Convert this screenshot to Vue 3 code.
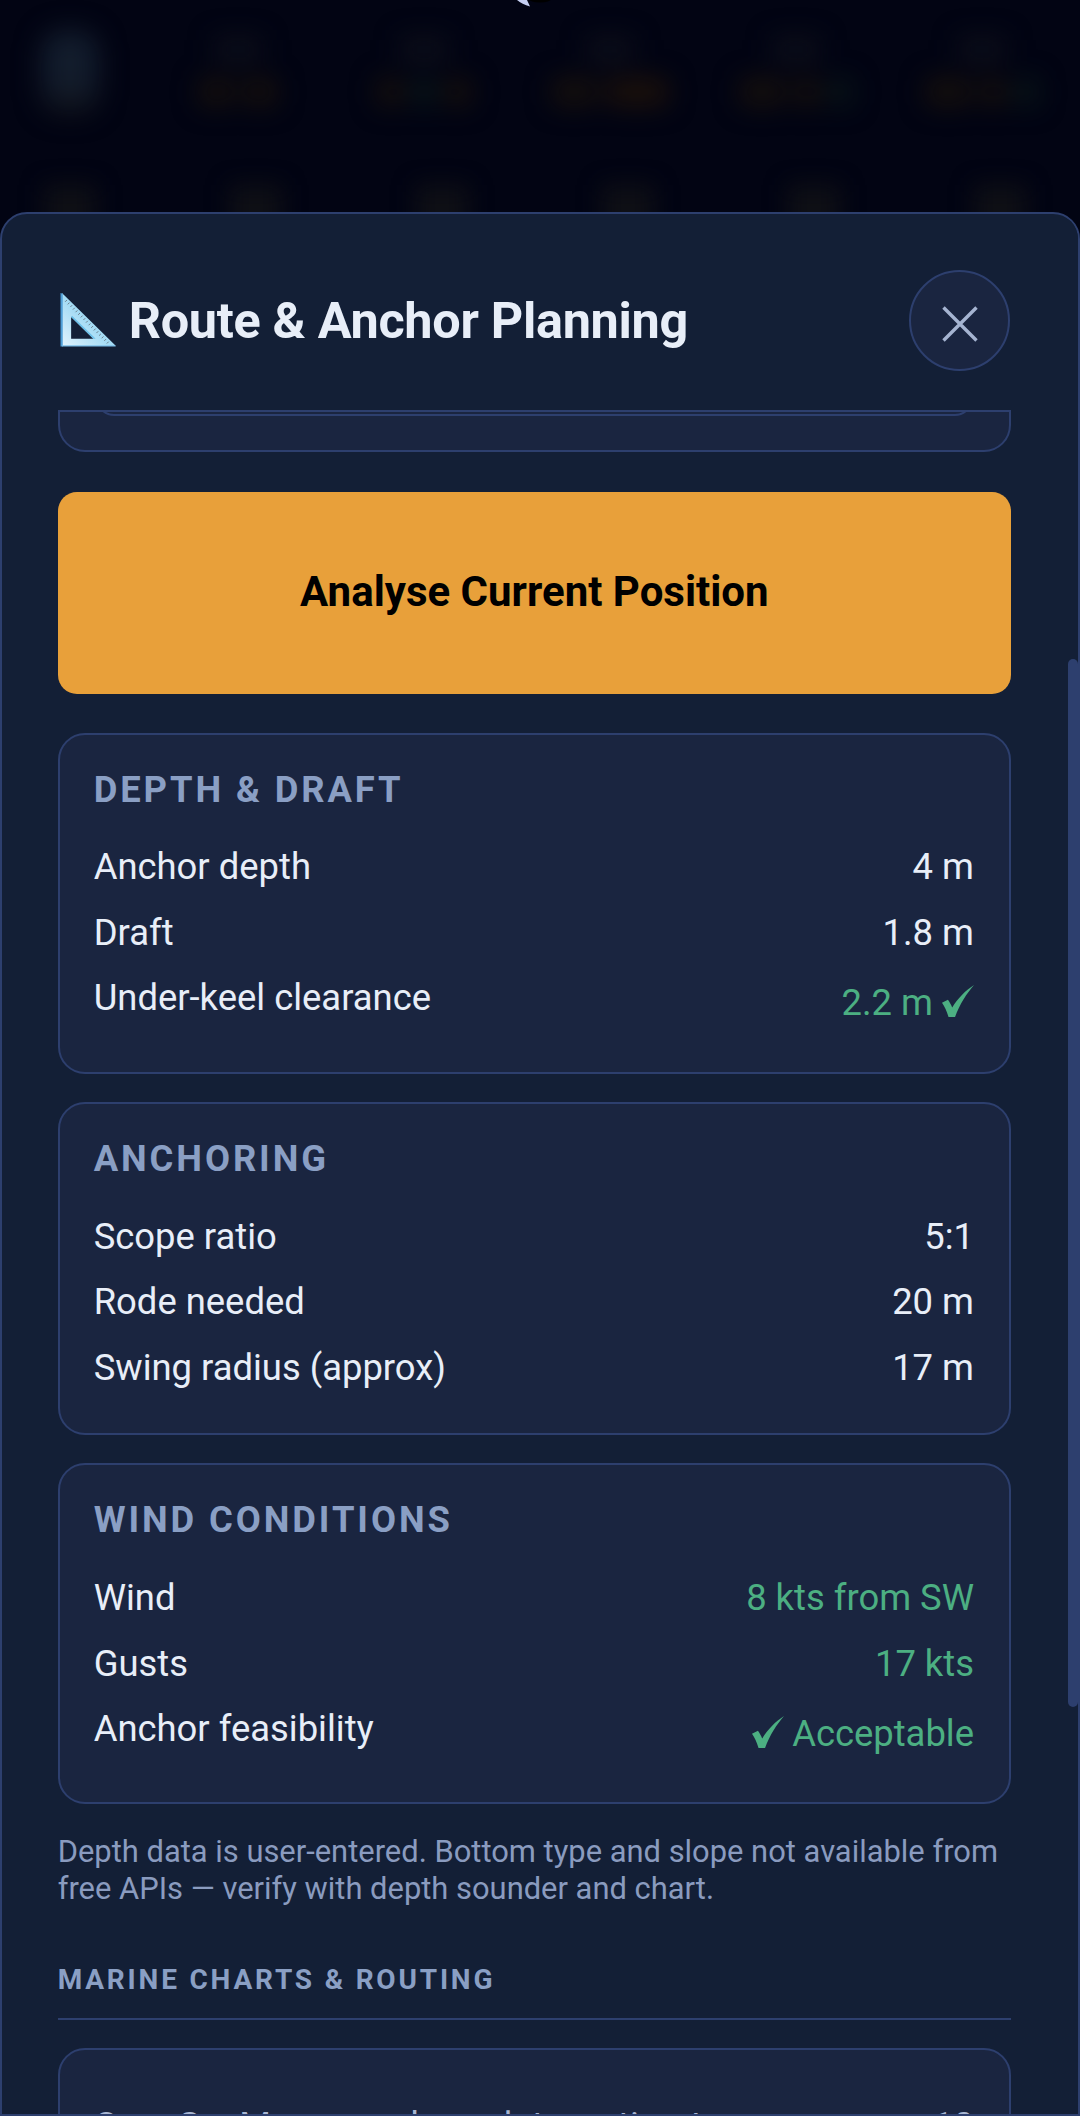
<script setup>
const cols = [
  { pills: ['o w', 'o w'] },
  { pills: ['o s', 'g s', 'o s'] },
  { pills: ['o m', 'o xl'] },
  { pills: ['o m', 'o s', 'g s'] },
  { pills: ['o m', 'o s', 'g s'] },
]

const cards = [
  {
    title: 'Depth & Draft',
    rows: [
      { label: 'Anchor depth', value: '4 m' },
      { label: 'Draft', value: '1.8 m' },
      { label: 'Under-keel clearance', value: '2.2 m', after: true, good: true },
    ],
  },
  {
    title: 'Anchoring',
    rows: [
      { label: 'Scope ratio', value: '5:1' },
      { label: 'Rode needed', value: '20 m' },
      { label: 'Swing radius (approx)', value: '17 m' },
    ],
  },
  {
    title: 'Wind conditions',
    rows: [
      { label: 'Wind', value: '8 kts from SW', good: true },
      { label: 'Gusts', value: '17 kts', good: true },
      { label: 'Anchor feasibility', before: true, value: 'Acceptable', good: true },
    ],
  },
]

const ticks = Array.from({ length: 17 }, (_, i) => {
  const t = 0.1 + i * 0.052
  const x = 2 + 52 * t
  const y = 2 + 52 * t
  return { x1: x, y1: y, x2: x - 1.9, y2: y + 1.9 }
})
</script>

<template>
  <div class="page">
    <div class="backdrop">
      <div class="blur-layer">
        <div class="first-col"></div>
        <div v-for="(c, i) in cols" :key="i" class="col">
          <span class="label-blob"></span>
          <div class="pills">
            <span v-for="(p, j) in c.pills" :key="j" class="pill" :class="p"></span>
          </div>
        </div>
      </div>
      <div class="blur-layer row-two">
        <span v-for="n in 6" :key="n" class="lower-blob"></span>
      </div>
    </div>

    <svg class="fragment" width="80" height="8" viewBox="0 0 80 8" aria-hidden="true">
      <path d="M27 0 L37 0 L40 6.5 Q32 4 27 0 Z" fill="#c6cff2" />
      <ellipse cx="50" cy="-1" rx="11" ry="3.4" fill="#000" />
    </svg>

    <section class="sheet">
      <header class="sheet-head">
        <h1 class="title">
          <svg class="set-square" viewBox="0 0 58 56" aria-hidden="true">
            <defs>
              <linearGradient id="sq" x1="0" y1="1" x2="1" y2="0">
                <stop offset="0" stop-color="#e2f3fd" />
                <stop offset="0.45" stop-color="#a6dcf5" />
                <stop offset="1" stop-color="#8fd0f0" />
              </linearGradient>
            </defs>
            <path fill-rule="evenodd" fill="url(#sq)" d="M2 0 L58 55 L2 55 Z M11.5 25 L11.5 47.5 L34.5 47.5 Z" />
            <path d="M0.5 0 L2.8 0.8 L2.8 55.5 L0.5 55.5 Z" fill="#4f9fd8" />
            <path d="M11.5 25 L34.5 47.5 L37 47.5 L12.5 23.5 Z" fill="#6cc0ea" />
            <path d="M2 54.2 L56.5 54.2 L58 55.5 L2 55.5 Z" fill="#7fc0ea" />
            <g stroke="#66717c" stroke-width="0.9">
              <line v-for="(t, i) in ticks" :key="i" :x1="t.x1" :y1="t.y1" :x2="t.x2" :y2="t.y2" />
            </g>
          </svg>
          <span>Route &amp; Anchor Planning</span>
        </h1>
        <button class="close" type="button" aria-label="Close">
          <svg width="36" height="36" viewBox="0 0 36 36" aria-hidden="true">
            <path d="M1.5 1.5 L34.5 34.5 M34.5 1.5 L1.5 34.5" stroke="#a5b4d1" stroke-width="3.4" fill="none" />
          </svg>
        </button>
      </header>

      <div class="scroll">
        <div class="stub">
          <div class="stub-inner"></div>
        </div>

        <button class="analyse" type="button">Analyse Current Position</button>

        <article v-for="card in cards" :key="card.title" class="card">
          <h2 class="card-title">{{ card.title }}</h2>
          <div v-for="row in card.rows" :key="row.label" class="row">
            <span class="row-label">{{ row.label }}</span>
            <span class="row-value" :class="{ good: row.good, tall: row.before || row.after }">
              <svg v-if="row.before" class="check check-before" viewBox="0 0 27 27" aria-hidden="true">
                <path d="M27 0 C21 7 15 16 11 27 L5.5 27 C4 22 2.2 18 0 15 L5 12.5 C6.5 14.5 7.6 16.5 8.6 19 C13 11.5 20 4.5 27 0 Z" />
              </svg>{{ row.value }}<svg v-if="row.after" class="check check-after" viewBox="0 0 27 27" aria-hidden="true">
                <path d="M27 0 C21 7 15 16 11 27 L5.5 27 C4 22 2.2 18 0 15 L5 12.5 C6.5 14.5 7.6 16.5 8.6 19 C13 11.5 20 4.5 27 0 Z" />
              </svg>
            </span>
          </div>
        </article>

        <p class="note">
          Depth data is user-entered. Bottom type and slope not available from free APIs — verify with depth sounder and chart.
        </p>

        <h3 class="section">Marine charts &amp; routing</h3>

        <article class="card card-last">
          <div class="row">
            <span class="row-label muted">OpenSeaMap nearshore data, estimates</span>
            <span class="row-value muted">10</span>
          </div>
        </article>
      </div>

      <div class="scrollbar"><div class="thumb"></div></div>
    </section>
  </div>
</template>

<style>
html,
body {
  margin: 0;
  background: #020413;
}
</style>

<style scoped>
* {
  box-sizing: border-box;
}

.page {
  position: relative;
  width: 1080px;
  height: 2116px;
  overflow: hidden;
  background: #020413;
  font-family: Roboto, sans-serif;
  color: #e8eef8;
}

.backdrop {
  height: 212px;
  overflow: hidden;
}

.blur-layer {
  display: grid;
  grid-template-columns: 62px repeat(5, 186px);
  padding-left: 41px;
  height: 130px;
  filter: blur(13px);
}

.first-col {
  width: 58px;
  height: 84px;
  margin-top: 30px;
  border-radius: 22px;
  background: linear-gradient(#121c2c, #121c2c 60%, #101219);
}

.col {
  display: flex;
  flex-direction: column;
  align-items: center;
  padding-top: 38px;
  gap: 18px;
  transform: translateX(42px);
}

.label-blob {
  width: 46px;
  height: 22px;
  background: #0d0f1a;
}

.pills {
  display: flex;
  gap: 10px;
  align-items: center;
}

.pill {
  height: 28px;
  border-radius: 8px;
  width: 26px;
}

.pill.o { background: #16100c; }
.pill.g { background: #081618; width: 22px; }
.pill.m { width: 44px; }
.pill.w { width: 34px; }
.pill.xl { width: 62px; background: #1c110a; }

.row-two {
  display: flex;
  justify-content: flex-start;
  gap: 134px;
  padding-left: 44px;
  height: 40px;
  margin-top: 55px;
  filter: blur(11px);
}

.lower-blob {
  width: 52px;
  height: 50px;
  background: #0e0f15;
}

.fragment {
  position: absolute;
  left: 490px;
  top: 0;
}

.sheet {
  position: absolute;
  left: 0;
  right: 0;
  top: 212px;
  bottom: 0;
  display: flex;
  flex-direction: column;
  background: #131f36;
  border: 2.8px solid #2d3f6e;
  border-radius: 27px 27px 0 0;
  overflow: hidden;
}

.sheet-head {
  flex: none;
  height: 195.5px;
  display: flex;
  align-items: flex-start;
  justify-content: space-between;
  padding: 56px 68px 0 55.7px;
}

.title {
  margin: 0;
  display: flex;
  align-items: center;
  gap: 13px;
  height: 101px;
  font-size: 50.4px;
  font-weight: 700;
  letter-spacing: -0.3px;
  color: #e8eef8;
  white-space: nowrap;
}

.set-square {
  width: 56px;
  height: 54px;
  flex: none;
  margin-left: 2px;
  margin-top: -1px;
}

.close {
  width: 101px;
  height: 101px;
  padding: 6px 0 0;
  border: 2.8px solid #2d3f6e;
  border-radius: 50%;
  background: #1a2540;
  display: flex;
  align-items: center;
  justify-content: center;
}

.scroll {
  flex: 1;
  min-height: 0;
  overflow: hidden;
  padding: 0 67px 0 55.7px;
}

.stub {
  height: 42px;
  margin-bottom: 40px;
  background: #1a2540;
  border: 2.8px solid #2d3f6e;
  border-radius: 0 0 27px 27px;
  overflow: hidden;
}

.stub-inner {
  height: 36px;
  margin: -32px 36px 0;
  border: 2.8px solid #2d3f6e;
  border-radius: 27px;
}

.analyse {
  display: block;
  width: 100%;
  height: 202px;
  margin: 0 0 39px;
  padding: 0 0 2px;
  border: 0;
  border-radius: 19px;
  background: #e8a03a;
  color: #000;
  font-family: Roboto, sans-serif;
  font-size: 42px;
  font-weight: 700;
}

.card {
  margin-bottom: 28.4px;
  padding: 33px 35px 32px 34px;
  background: #1a2540;
  border: 2.8px solid #2d3f6e;
  border-radius: 27px;
}

.card-title {
  margin: 0 0 23px;
  font-size: 36.4px;
  line-height: 44px;
  font-weight: 700;
  letter-spacing: 2.9px;
  text-transform: uppercase;
  color: #8a9fc4;
}

.row {
  display: flex;
  justify-content: space-between;
  align-items: flex-start;
  padding: 5.55px 0;
  font-size: 36.4px;
  line-height: 54.6px;
}

.row-value {
  color: #e8eef8;
  text-align: right;
}

.good {
  color: #4caf82;
}

.tall {
  padding: 5px 0 3px;
}

.check {
  width: 32px;
  height: 34px;
  fill: #4caf82;
  vertical-align: -3px;
}

.check-before {
  margin-right: 8px;
}

.check-after {
  margin-left: 9px;
}

.note {
  margin: 0 0 56.5px;
  font-size: 30.9px;
  line-height: 37px;
  color: #8a9bbf;
}

.section {
  margin: 0 0 28px;
  padding-bottom: 20.5px;
  border-bottom: 2.8px solid #2d3f6e;
  font-size: 28px;
  line-height: 34px;
  font-weight: 700;
  letter-spacing: 2.8px;
  text-transform: uppercase;
  color: #8a9fc4;
}

.card-last {
  margin-bottom: 0;
  padding-top: 44px;
}

.muted {
  color: #a9b7d3;
}

.scrollbar {
  position: absolute;
  top: 0;
  bottom: 0;
  right: 0;
  width: 10.5px;
  background: #131f36;
}

.thumb {
  position: absolute;
  left: 0;
  right: 0;
  top: 445px;
  height: 1048px;
  background: #2d3f6e;
  border-radius: 5px;
}
</style>
